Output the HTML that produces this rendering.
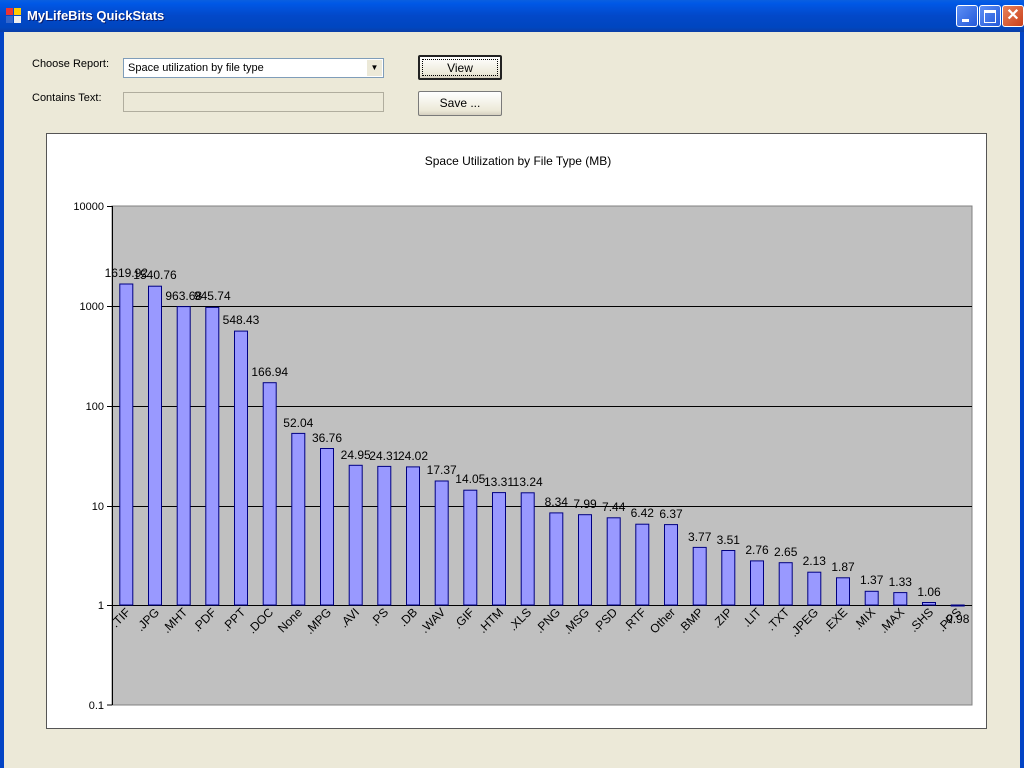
<!DOCTYPE html>
<html><head><meta charset="utf-8"><style>
body{margin:0;width:1024px;height:768px;overflow:hidden;background:#ECE9D8;font-family:"Liberation Sans",sans-serif;position:relative}
.tb{position:absolute;left:0;top:0;width:1024px;height:32px;background:linear-gradient(#0A5FE0,#0058E6 10%,#0348C8 50%,#0046C0 85%,#0B3FA8);}
.tb .t{position:absolute;left:27px;top:8px;color:#fff;font-weight:bold;font-size:13px;text-shadow:1px 1px #0a1e6e}
.lb,.rb{position:absolute;top:32px;width:4px;height:736px;background:#0344C5}
.lb{left:0}.rb{right:0}
.wb{position:absolute;top:5px;width:20px;height:20px;border:1px solid #fff;border-radius:3px;background:linear-gradient(135deg,#5d8ff5,#2459d9)}
.lbl{position:absolute;font-size:11px;color:#000}
.sel{position:absolute;left:123px;top:58px;width:261px;height:20px;background:#fff;border:1px solid #7f9db9;box-sizing:border-box;font-size:11px;padding:3px 4px}
.ar{position:absolute;right:1px;top:1px;width:15px;height:16px;background:#ECE9D8;border-left:1px solid #fff;font-size:8px;text-align:center;line-height:16px}
.inp{position:absolute;left:123px;top:92px;width:261px;height:20px;background:#ECE9D8;border:1px solid #b0ad9e;box-sizing:border-box}
.btn{position:absolute;left:418px;width:84px;height:25px;box-sizing:border-box;border:1px solid #7a7a7a;background:linear-gradient(#fff,#ECE9D8 80%,#d6d0c0);font-size:12px;text-align:center;line-height:22px;border-radius:2px}
.chart{position:absolute;left:46px;top:133px;width:941px;height:596px;background:#fff;border:1px solid #555;box-sizing:border-box}
</style></head><body>
<div class="tb"><svg style="position:absolute;left:6px;top:8px" width="16" height="16"><rect x="0" y="0" width="7" height="7" fill="#e33"/><rect x="8" y="0" width="7" height="7" fill="#fc0"/><rect x="0" y="8" width="7" height="7" fill="#36c"/><rect x="8" y="8" width="7" height="7" fill="#eee"/></svg><span class="t">MyLifeBits QuickStats</span>
<div class="wb" style="left:956px"><div style="position:absolute;left:5px;top:13px;width:7px;height:3px;background:#fff"></div></div>
<div class="wb" style="left:979px"><div style="position:absolute;left:4px;top:4px;width:10px;height:9px;border:1px solid #fff;border-top-width:3px"></div></div>
<div class="wb" style="left:1002px;background:linear-gradient(135deg,#e9825a,#c9401b);color:#fff;font-size:16px;text-align:center;line-height:20px;font-weight:bold">✕</div>
</div>
<div class="lb"></div><div class="rb"></div>
<div class="lbl" style="left:32px;top:58px">Choose Report:</div>
<div class="lbl" style="left:32px;top:92px">Contains Text:</div>
<div class="sel">Space utilization by file type<div class="ar">▼</div></div>
<div class="inp"></div>
<div class="btn" style="top:55px;border:2px solid #222;outline:1px dotted #000;outline-offset:-5px">View</div>
<div class="btn" style="top:91px">Save ...</div>
<div class="chart"></div>
<svg style="position:absolute;left:0;top:0" width="1024" height="768" font-family="Liberation Sans, sans-serif" font-size="12">
<text x="518" y="165" text-anchor="middle" font-size="12">Space Utilization by File Type (MB)</text>
<rect x="112" y="206" width="860" height="499" fill="#C0C0C0" stroke="#808080"/>
<g stroke="#000" stroke-width="1">
<line x1="112" y1="306.5" x2="972" y2="306.5"/><line x1="112" y1="406.5" x2="972" y2="406.5"/><line x1="112" y1="506.5" x2="972" y2="506.5"/><line x1="112" y1="605.5" x2="972" y2="605.5"/>
<line x1="112.5" y1="206" x2="112.5" y2="705"/>
<line x1="107" y1="206.5" x2="112" y2="206.5"/><line x1="107" y1="306.5" x2="112" y2="306.5"/><line x1="107" y1="406.5" x2="112" y2="406.5"/><line x1="107" y1="506.5" x2="112" y2="506.5"/><line x1="107" y1="605.5" x2="112" y2="605.5"/><line x1="107" y1="705" x2="112" y2="705"/>
</g>
<g text-anchor="end" font-size="11"><text x="104" y="210">10000</text><text x="104" y="310">1000</text><text x="104" y="410">100</text><text x="104" y="510">10</text><text x="104" y="609">1</text><text x="104" y="709">0.1</text></g>
<g fill="#9999FF" stroke="#000080" stroke-width="1">
<rect x="119.8" y="284" width="13" height="321"/><rect x="148.5" y="286.2" width="13" height="318.8"/><rect x="177.2" y="306.6" width="13" height="298.4"/><rect x="205.8" y="307.4" width="13" height="297.6"/><rect x="234.5" y="331.1" width="13" height="273.9"/><rect x="263.2" y="382.7" width="13" height="222.3"/><rect x="291.8" y="433.4" width="13" height="171.6"/><rect x="320.5" y="448.5" width="13" height="156.5"/><rect x="349.2" y="465.3" width="13" height="139.7"/><rect x="377.8" y="466.4" width="13" height="138.6"/><rect x="406.5" y="466.9" width="13" height="138.1"/><rect x="435.2" y="481" width="13" height="124"/><rect x="463.8" y="490.2" width="13" height="114.8"/><rect x="492.5" y="492.6" width="13" height="112.4"/><rect x="521.2" y="492.8" width="13" height="112.2"/><rect x="549.8" y="512.9" width="13" height="92.1"/><rect x="578.5" y="514.7" width="13" height="90.3"/><rect x="607.2" y="517.8" width="13" height="87.2"/><rect x="635.8" y="524.2" width="13" height="80.8"/><rect x="664.5" y="524.6" width="13" height="80.4"/><rect x="693.2" y="547.4" width="13" height="57.6"/><rect x="721.8" y="550.5" width="13" height="54.5"/><rect x="750.5" y="560.9" width="13" height="44.1"/><rect x="779.2" y="562.7" width="13" height="42.3"/><rect x="807.8" y="572.2" width="13" height="32.8"/><rect x="836.5" y="577.8" width="13" height="27.2"/><rect x="865.2" y="591.3" width="13" height="13.7"/><rect x="893.8" y="592.6" width="13" height="12.4"/><rect x="922.5" y="602.5" width="13" height="2.5"/><rect x="951.2" y="605" width="13" height="1"/>
</g>
<g text-anchor="middle">
<text x="126.3" y="277">1619.92</text><text x="155" y="279">1540.76</text><text x="183.7" y="300">963.68</text><text x="212.3" y="300">945.74</text><text x="241" y="324">548.43</text><text x="269.7" y="376">166.94</text><text x="298.3" y="427">52.04</text><text x="327" y="442">36.76</text><text x="355.7" y="459">24.95</text><text x="384.3" y="460">24.31</text><text x="413" y="460">24.02</text><text x="441.7" y="474">17.37</text><text x="470.3" y="483">14.05</text><text x="499" y="486">13.31</text><text x="527.7" y="486">13.24</text><text x="556.3" y="506">8.34</text><text x="585" y="508">7.99</text><text x="613.7" y="511">7.44</text><text x="642.3" y="517">6.42</text><text x="671" y="518">6.37</text><text x="699.7" y="541">3.77</text><text x="728.3" y="544">3.51</text><text x="757" y="554">2.76</text><text x="785.7" y="556">2.65</text><text x="814.3" y="565">2.13</text><text x="843" y="571">1.87</text><text x="871.7" y="584">1.37</text><text x="900.3" y="586">1.33</text><text x="929" y="596">1.06</text><text x="957.7" y="623">0.98</text>
</g>
<g text-anchor="end" font-size="12">
<text transform="translate(131,613) rotate(-45)">.TIF</text><text transform="translate(160,613) rotate(-45)">.JPG</text><text transform="translate(188,613) rotate(-45)">.MHT</text><text transform="translate(217,613) rotate(-45)">.PDF</text><text transform="translate(246,613) rotate(-45)">.PPT</text><text transform="translate(274,613) rotate(-45)">.DOC</text><text transform="translate(303,613) rotate(-45)">None</text><text transform="translate(332,613) rotate(-45)">.MPG</text><text transform="translate(360,613) rotate(-45)">.AVI</text><text transform="translate(389,613) rotate(-45)">.PS</text><text transform="translate(418,613) rotate(-45)">.DB</text><text transform="translate(446,613) rotate(-45)">.WAV</text><text transform="translate(475,613) rotate(-45)">.GIF</text><text transform="translate(504,613) rotate(-45)">.HTM</text><text transform="translate(532,613) rotate(-45)">.XLS</text><text transform="translate(561,613) rotate(-45)">.PNG</text><text transform="translate(590,613) rotate(-45)">.MSG</text><text transform="translate(618,613) rotate(-45)">.PSD</text><text transform="translate(647,613) rotate(-45)">.RTF</text><text transform="translate(676,613) rotate(-45)">Other</text><text transform="translate(704,613) rotate(-45)">.BMP</text><text transform="translate(733,613) rotate(-45)">.ZIP</text><text transform="translate(762,613) rotate(-45)">.LIT</text><text transform="translate(790,613) rotate(-45)">.TXT</text><text transform="translate(819,613) rotate(-45)">.JPEG</text><text transform="translate(848,613) rotate(-45)">.EXE</text><text transform="translate(876,613) rotate(-45)">.MIX</text><text transform="translate(905,613) rotate(-45)">.MAX</text><text transform="translate(934,613) rotate(-45)">.SHS</text><text transform="translate(962,613) rotate(-45)">.PPS</text>
</g>
</svg>
</body></html>
